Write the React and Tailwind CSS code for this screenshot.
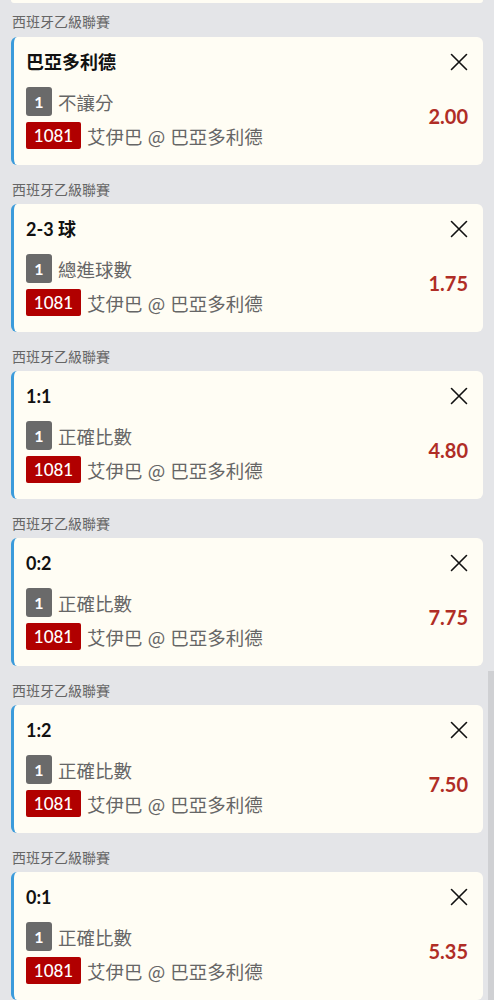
import React from "react";

const bets = [
  { title: "巴亞多利德", market: "不讓分", odds: "2.00" },
  { title: "2-3 球", market: "總進球數", odds: "1.75" },
  { title: "1:1", market: "正確比數", odds: "4.80" },
  { title: "0:2", market: "正確比數", odds: "7.75" },
  { title: "1:2", market: "正確比數", odds: "7.50" },
  { title: "0:1", market: "正確比數", odds: "5.35" },
];

const font = { fontFamily: 'Lato, "Noto Sans CJK TC", sans-serif' };
const cjk = { fontFamily: '"Noto Sans CJK TC", sans-serif' };

function CloseIcon() {
  return (
    <svg width="18" height="18" viewBox="0 0 18 18" fill="none" stroke="#111" strokeWidth="1.6" strokeLinecap="round">
      <path d="M1.5 1.5 L16.5 16.5 M16.5 1.5 L1.5 16.5" />
    </svg>
  );
}

function Card({ bet }) {
  return (
    <div className="rounded-[6px] bg-[#fffdf4] border-l-[3px] border-[#3b9bdb] pl-[12px] pr-[15px] pt-[13px] pb-[16px]">
      <div className="flex items-center justify-between h-[24px]">
        <div className="text-[18px] font-bold text-[#111] leading-[24px]">{bet.title}</div>
        <div><CloseIcon /></div>
      </div>
      <div className="flex items-center justify-between mt-[13px]">
        <div className="flex flex-col gap-[6px]">
          <div className="flex items-center gap-[6px] h-[29px]">
            <div className="w-[26px] h-[29px] rounded-[3px] bg-[#6a6a6a] text-white text-[16px] font-bold flex items-center justify-center">1</div>
            <div className="text-[18.5px] text-[#666] leading-[24px]" style={cjk}>{bet.market}</div>
          </div>
          <div className="flex items-center gap-[6px] h-[27px]">
            <div className="w-[55px] h-[27px] rounded-[2px] bg-[#b10000] text-white text-[17px] font-medium flex items-center justify-center">1081</div>
            <div className="text-[18.5px] text-[#666] leading-[24px] [word-spacing:1px]" style={cjk}>艾伊巴 @ 巴亞多利德</div>
          </div>
        </div>
        <div className="text-[20px] font-bold text-[#b02d26] -mt-[5px]">{bet.odds}</div>
      </div>
    </div>
  );
}

export default function App() {
  return (
    <div className="relative w-[494px] h-[1000px] overflow-hidden bg-[#e4e5e8]" style={font}>
      <div className="px-[11px]">
        <div className="h-[3px] rounded-b-[6px] bg-[#fffdf4]" />
        {bets.map((b, i) => (
          <div key={i}>
            <div className={(i === 0 ? "pt-[8px] mb-[6px]" : "pt-[14px] mb-[5px]") + " text-[14px] leading-[20px] text-[#666] pl-[1px]"} style={cjk}>西班牙乙級聯賽</div>
            <Card bet={b} />
          </div>
        ))}
      </div>
      <div className="absolute right-0 top-[671px] w-[6px] h-[329px] bg-[#cfd0d3]" />
    </div>
  );
}
